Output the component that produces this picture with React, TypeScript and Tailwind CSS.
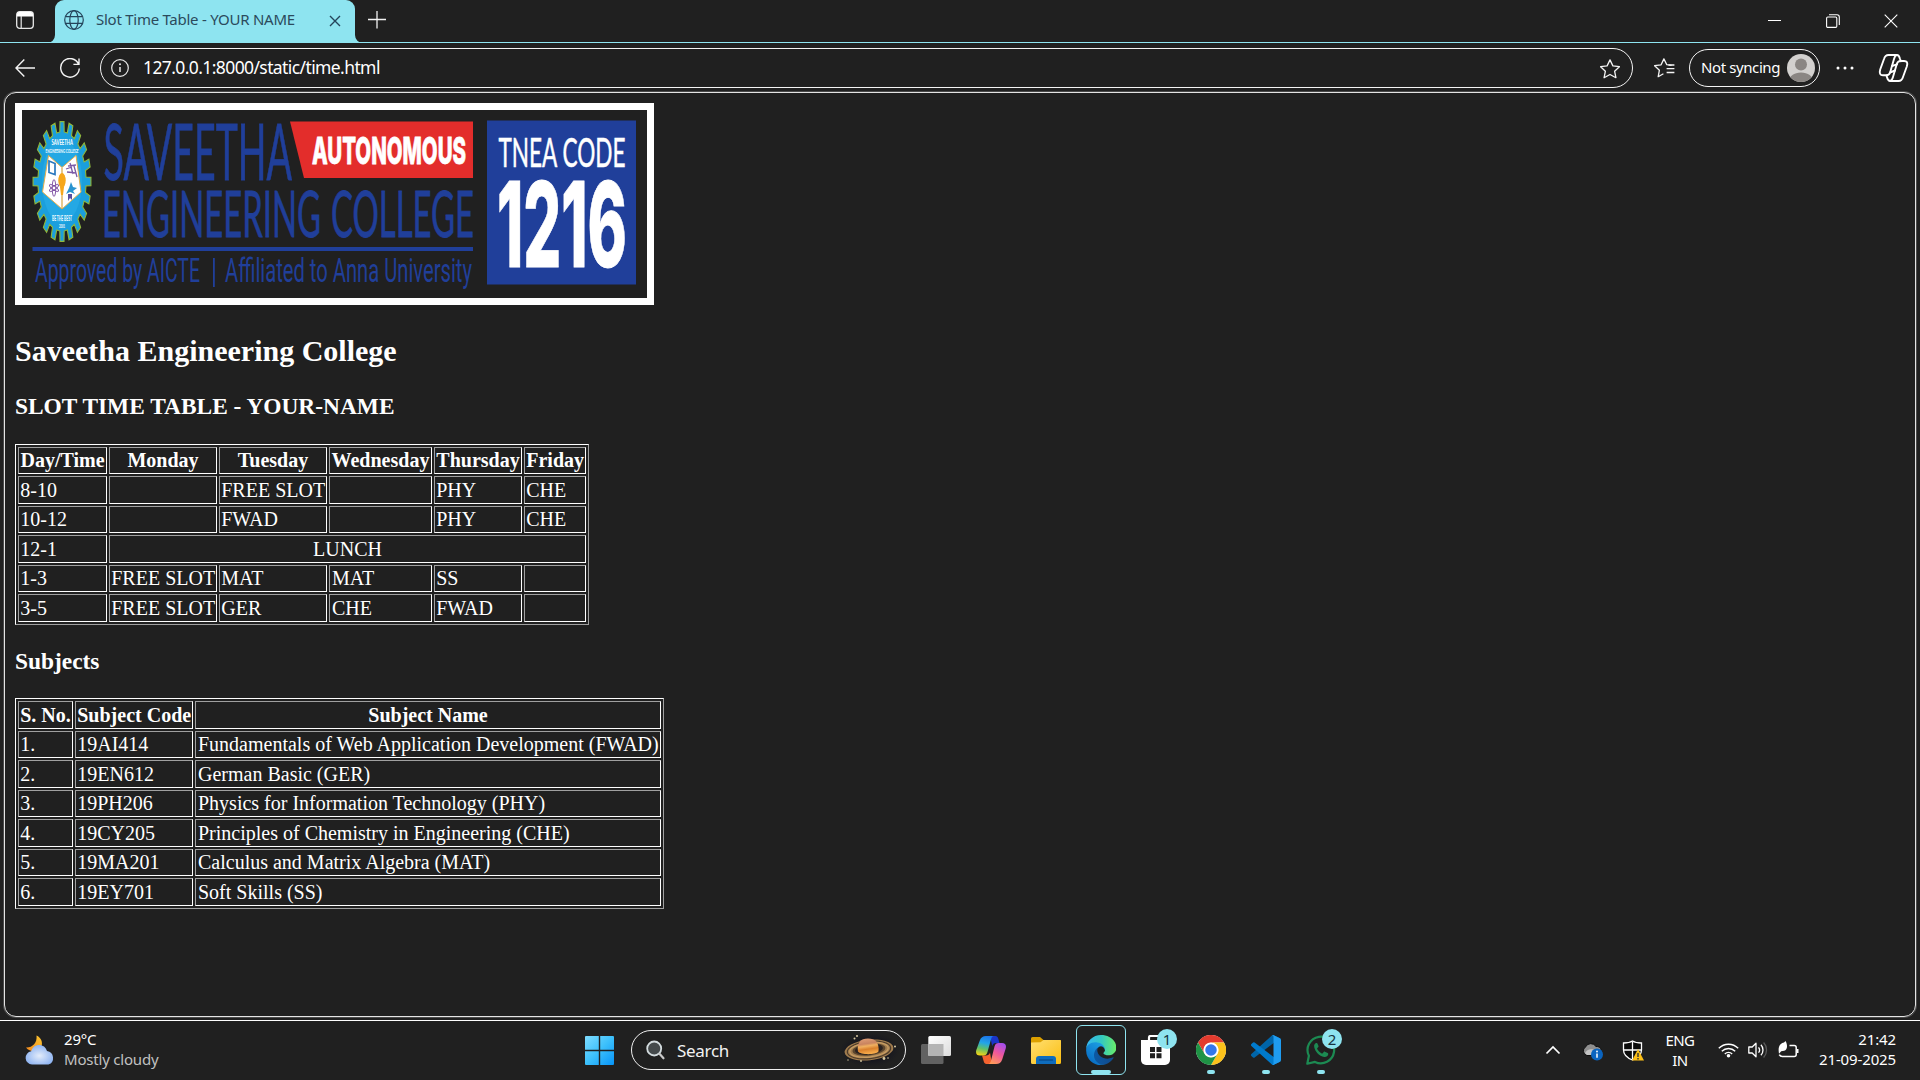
import React from "react";

const UI = "font-['Noto_Sans','Open_Sans',sans-serif]";

/* ---------- Title bar ---------- */

function TitleBar() {
  return (
    <div className="flex h-[43px] shrink-0 items-start border-b border-[#8ee4f0] bg-[#202020]">
      <div className="flex h-[42px] w-[55px] shrink-0 items-center pl-4">
        <svg width="18" height="18" viewBox="0 0 18 18" className="-mt-[2px]">
          <rect x="0.7" y="0.7" width="16.6" height="16.6" rx="3" fill="none" stroke="#e8e8e8" strokeWidth="1.3" />
          <path d="M1 5.6V3a2 2 0 0 1 2-2h12a2 2 0 0 1 2 2v2.6z" fill="#fff" />
          <path d="M5.2 5v12" stroke="#e8e8e8" strokeWidth="1.2" />
        </svg>
      </div>
      <div className="relative flex h-[43px] w-[300px] shrink-0 items-center rounded-t-[9px] bg-[#8ee4f0] pb-1 text-[#2b4a5c]">
        <svg className="absolute bottom-0 -left-2" width="8" height="8" viewBox="0 0 8 8">
          <path d="M8 0v8H0a8 8 0 0 0 8-8z" fill="#8ee4f0" />
        </svg>
        <svg className="absolute -right-2 bottom-0" width="8" height="8" viewBox="0 0 8 8">
          <path d="M0 0v8h8a8 8 0 0 1-8-8z" fill="#8ee4f0" />
        </svg>
        <svg className="ml-[9px] shrink-0" width="20" height="20" viewBox="0 0 20 20" fill="none" stroke="#24445a" strokeWidth="1.2">
          <circle cx="10" cy="10" r="9.3" />
          <ellipse cx="10" cy="10" rx="4.2" ry="9.3" />
          <path d="M1.5 6.6h17M1.5 13.4h17" />
        </svg>
        <span className={`${UI} ml-[12px] w-[234px] text-[15px] tracking-[-0.26px] whitespace-nowrap`}>
          Slot Time Table - YOUR NAME
        </span>
        <svg className="mt-[2px] -ml-px shrink-0" width="12" height="12" viewBox="0 0 12 12" stroke="#24445a" strokeWidth="1.4">
          <path d="M1 1l10 10M11 1L1 11" />
        </svg>
      </div>
      <svg className="mt-[11px] ml-[13px]" width="18" height="18" viewBox="0 0 18 18" stroke="#f2f2f2" strokeWidth="1.3">
        <path d="M9 0v17.4M0 8.5h18" />
      </svg>
      <div className="ml-auto flex h-[42px] items-center">
        <svg width="13" height="14" viewBox="0 0 13 14" stroke="#fff">
          <path d="M0 6.5h13" />
        </svg>
        <svg className="ml-[45px]" width="14" height="14" viewBox="0 0 14 14" fill="none" stroke="#fff" strokeWidth="1.1">
          <rect x="0.6" y="3" width="10.2" height="10.4" rx="1.2" />
          <path d="M3 .7h8a2.3 2.3 0 0 1 2.3 2.3v8" />
        </svg>
        <svg className="mr-[22px] ml-[44px]" width="14" height="14" viewBox="0 0 14 14" stroke="#fff" strokeWidth="1.1">
          <path d="M.7.7l12.6 12.6M13.3.7L.7 13.3" />
        </svg>
      </div>
    </div>
  );
}

/* ---------- Address toolbar ---------- */

const STAR = "M10 .9l2.9 6 6.5.8-4.8 4.5 1.3 6.5-5.9-3.2-5.9 3.2 1.3-6.5L.6 7.7l6.5-.8z";

function Toolbar() {
  return (
    <div className="flex h-[49px] shrink-0 items-start pt-[5px]">
      <div className="flex h-10 w-[100px] shrink-0 items-center pl-[15px]">
        <svg width="20" height="18" viewBox="0 0 20 18" fill="none" stroke="#f4f4f4" strokeWidth="1.4">
          <path d="M9.3.6L1 9l8.3 8.4M1 9h19" />
        </svg>
        <svg className="ml-[25px]" width="20" height="21" viewBox="0 0 20 21" fill="none" stroke="#f4f4f4" strokeWidth="1.4">
          <path d="M18.6 6.2A9.3 9.3 0 1 0 19.3 10.5M19 .6v5.8h-5.6" />
        </svg>
      </div>
      <div className="flex h-10 w-[1533px] shrink-0 items-center rounded-full border border-[#f4f4f4] pr-3 pl-[10px]">
        <svg width="18" height="18" viewBox="0 0 18 18" fill="none" stroke="#e8e8e8" strokeWidth="1.2">
          <circle cx="9" cy="9" r="8.3" />
          <path d="M9 7.9v5.2" strokeWidth="1.5" />
          <circle cx="9" cy="5.3" r="1" fill="#e8e8e8" stroke="none" />
        </svg>
        <span className={`${UI} ml-[14px] pb-[2px] text-[17.5px] tracking-[-0.6px] whitespace-nowrap text-white`}>
          127.0.0.1:8000/static/time.html
        </span>
        <svg className="mt-px ml-auto" width="20" height="20" viewBox="0 0 20 20" fill="none" stroke="#f4f4f4" strokeWidth="1.3" strokeLinejoin="round">
          <path d={STAR} />
        </svg>
      </div>
      <svg className="mt-[10px] ml-[21px] shrink-0" width="21" height="20" viewBox="0 0 21 20" fill="none" stroke="#f4f4f4" strokeWidth="1.3" strokeLinejoin="round">
        <path d="M17.6 7.3l-4.8-.6L9.9.9 7.1 6.8.6 7.700l4.8 4.500-1.200 6.500 5.200-2.900" />
        <path d="M12.600 10.600H20.400M12.600 14.500H20.400M14.500 7H20.400" />
      </svg>
      <div className="mt-px ml-[14px] flex h-[38px] w-[131px] shrink-0 items-center rounded-full border border-[#f4f4f4] pl-[11px]">
        <span className={`${UI} w-[86px] pb-px text-[15px] tracking-[-0.4px] whitespace-nowrap text-white`}>Not syncing</span>
        <svg className="shrink-0" width="28" height="28" viewBox="0 0 28 28">
          <defs>
            <clipPath id="avatar"><circle cx="14" cy="14" r="14" /></clipPath>
          </defs>
          <circle cx="14" cy="14" r="14" fill="#d2d0ce" />
          <g clipPath="url(#avatar)" fill="#8a8683">
            <circle cx="14" cy="10.500" r="6" />
            <path d="M2 28c0-6 5-9.500 12-9.500S26 22 26 28z" />
          </g>
        </svg>
      </div>
      <svg className="mt-[18px] ml-[16px] shrink-0" width="18" height="4" viewBox="0 0 18 4" fill="#fff">
        <circle cx="2" cy="2" r="1.500" />
        <circle cx="9" cy="2" r="1.500" />
        <circle cx="16" cy="2" r="1.500" />
      </svg>
      <svg className="mt-[5px] ml-[24px] shrink-0" width="31" height="30" viewBox="0 0 31 30" fill="none" stroke="#fff" strokeWidth="1.900" strokeLinejoin="round" strokeLinecap="round">
        <path d="M18.500 2H10.500C8 2 6.700 3.500 6 6L2.200 16.500C1 20.500 2.200 22.300 5 22.300H8.500C10.500 22.300 11.500 21.300 12.200 19.200L16 6C16.800 3.300 17.500 2 19 2C20.800 2 21.300 3.300 22 5.800L22.800 8.300" />
        <path d="M12.500 28H20.500C23 28 24.300 26.500 25 24L28.800 13.500C30 9.500 29 8 26 8H22.500C20.500 8 19.500 9 18.800 11L15 24C14.200 26.700 13.500 28 12 28C10.200 28 9.700 26.700 9 24.200L8.500 22.500" />
        <path d="M14 13L19 11.300M12 19.500L17 17.500" />
      </svg>
    </div>
  );
}

/* ---------- College banner ---------- */

const TEETH = 20;
const gear = Array.from({ length: TEETH * 4 }, (_, i) => {
  const phase = i % 4;
  const a = ((Math.floor(i / 4) + [-0.29, -0.22, 0.22, 0.29][phase]) / TEETH) * Math.PI * 2 - Math.PI / 2;
  const k = phase === 1 || phase === 2 ? 1 : 0.83;
  return `${(62 + 29 * k * Math.cos(a)).toFixed(2)},${(181.5 + 60 * k * Math.sin(a)).toFixed(2)}`;
}).join(" ");

type FitProps = {
  x: number;
  y: number;
  w: number;
  size: number;
  className: string;
  children: string;
};

function Fit({ x, y, w, size, className, children }: FitProps) {
  return (
    <text x={x} y={y} textLength={w} lengthAdjust="spacingAndGlyphs" fontSize={size} className={className}>
      {children}
    </text>
  );
}

const SEAL = "fill-white [font-family:Lato,sans-serif] font-bold";
const NAVY = "fill-[#203f9a] stroke-[#203f9a] stroke-[0.8px] [font-family:Lato,sans-serif] font-normal";
const THIN = "fill-[#203f9a] [font-family:Roboto,sans-serif] font-normal";
const HEAVY = "fill-white stroke-white stroke-[0.8px] [font-family:Inter,sans-serif] font-extrabold";

function Banner() {
  return (
    <div className="h-[202px] w-[639px] border-[7px] border-white">
      <svg width="625" height="188" viewBox="22 110 625 188" className="block overflow-visible">
        <polygon points={gear} fill="#1b9fdd" stroke="#8fb63c" strokeWidth="1.100" />
        <ellipse cx="62" cy="181" rx="20" ry="42" fill="#24a8e4" />
        <Fit x={51.500} y={144.500} w={21.500} size={8} className={SEAL}>SAVEETHA</Fit>
        <Fit x={45.500} y={152.500} w={33} size={5.500} className={SEAL}>ENGINEERING COLLEGE</Fit>
        <path d="M48.500 155.500L62 167.500L76 155.500L81 192L62 209L42.500 192z" fill="#fff" stroke="#e8b04c" strokeWidth="1" />
        <path d="M62 168v41" stroke="#d9a441" strokeWidth="1.200" />
        <ellipse cx="62" cy="180.500" rx="3.700" ry="7.500" fill="#f6a71c" />
        <path d="M60 187h4l-1 8h-2z" fill="#f6a71c" />
        <path d="M49 161l6 2.500v11l-6-2z" fill="#fff" stroke="#2a78be" strokeWidth="1.700" />
        <path d="M66 169l6-2M70 163l3 11M74 166l3 11M67 172l9 1M68 166l8-1" stroke="#7b5aa6" strokeWidth="1.300" />
        <g fill="none" stroke="#7a4a9e" strokeWidth="0.900">
          <ellipse cx="54" cy="188" rx="1.800" ry="8.500" />
          <ellipse cx="54" cy="188" rx="1.800" ry="5.500" transform="rotate(55 54 188)" />
          <ellipse cx="54" cy="188" rx="1.800" ry="5.500" transform="rotate(-55 54 188)" />
        </g>
        <path d="M71 182l2 5 4 1-4 3 2 3-5-2-4 2 3-6z" fill="#2a94d0" />
        <path d="M68 194h4v6l-2-2-2 3z" fill="#5a4fa0" />
        <Fit x={52} y={220.500} w={20} size={6.500} className={SEAL}>BE THE BEST</Fit>
        <Fit x={59} y={227.500} w={6} size={6} className={SEAL}>2001</Fit>

        <Fit x={103.500} y={180} w={188.500} size={78} className={NAVY}>SAVEETHA</Fit>
        <Fit x={102} y={236.500} w={219} size={64} className={NAVY}>ENGINEERING</Fit>
        <Fit x={331} y={236.500} w={143} size={64} className={NAVY}>COLLEGE</Fit>
        <polygon points="290,121.500 473,121.500 473,178 304,178" fill="#e32d2b" />
        <Fit x={312} y={163.500} w={154} size={37} className={HEAVY}>AUTONOMOUS</Fit>
        <rect x="32.500" y="247" width="440.500" height="4" fill="#203f9a" />
        <Fit x={35} y={281.500} w={165} size={33} className={THIN}>Approved by AICTE</Fit>
        <rect x="213" y="258" width="1.800" height="29" fill="#203f9a" />
        <Fit x={225} y={281.500} w={247} size={33} className={THIN}>Affiliated to Anna University</Fit>
        <rect x="487" y="120.500" width="149" height="164" fill="#203f9a" />
        <Fit x={498.500} y={166.500} w={127} size={40} className="fill-white stroke-white stroke-[0.5px] [font-family:Lato,sans-serif] font-normal">TNEA CODE</Fit>
        <Fit x={497} y={266.500} w={130} size={118} className={HEAVY}>1216</Fit>
      </svg>
    </div>
  );
}

/* ---------- Page tables ---------- */

const TABLE =
  "border-separate border-spacing-[2px] table-fixed border border-t-white border-l-white border-r-[#a0a0a0] border-b-[#a0a0a0] text-[20px] leading-[22px]";
const CELL =
  "border border-t-[#a0a0a0] border-l-[#a0a0a0] border-r-white border-b-white px-[1.250px] pt-0 pb-px whitespace-nowrap";

const slots: string[][] = [
  ["8-10", "", "FREE SLOT", "", "PHY", "CHE"],
  ["10-12", "", "FWAD", "", "PHY", "CHE"],
  ["12-1", "LUNCH"],
  ["1-3", "FREE SLOT", "MAT", "MAT", "SS", ""],
  ["3-5", "FREE SLOT", "GER", "CHE", "FWAD", ""],
];

const subjects: string[][] = [
  ["1.", "19AI414", "Fundamentals of Web Application Development (FWAD)"],
  ["2.", "19EN612", "German Basic (GER)"],
  ["3.", "19PH206", "Physics for Information Technology (PHY)"],
  ["4.", "19CY205", "Principles of Chemistry in Engineering (CHE)"],
  ["5.", "19MA201", "Calculus and Matrix Algebra (MAT)"],
  ["6.", "19EY701", "Soft Skills (SS)"],
];

function SlotTable() {
  return (
    <table className={`${TABLE} mt-[24px] w-[574px]`}>
      <colgroup>
        <col className="w-[89px]" />
        <col className="w-[108px]" />
        <col className="w-[108px]" />
        <col className="w-[103px]" />
        <col className="w-[88px]" />
        <col className="w-[62px]" />
      </colgroup>
      <tbody>
        <tr className="h-[27px]">
          {["Day/Time", "Monday", "Tuesday", "Wednesday", "Thursday", "Friday"].map((d) => (
            <th key={d} className={`${CELL} text-center font-bold`}>{d}</th>
          ))}
        </tr>
        {slots.map((row, r) => (
          <tr key={row[0]} className={r % 2 === 0 ? "h-[28px]" : "h-[27px]"}>
            {row.map((c, i) => (
              <td
                key={i}
                colSpan={row.length === 2 && i === 1 ? 5 : 1}
                className={`${CELL} ${row.length === 2 && i === 1 ? "text-center" : "text-left"} ${i === 3 ? "pl-[2px]" : ""}`}
              >
                {c}
              </td>
            ))}
          </tr>
        ))}
      </tbody>
    </table>
  );
}

function SubjectTable() {
  return (
    <table className={`${TABLE} mt-[23px] w-[649px]`}>
      <colgroup>
        <col className="w-[55px]" />
        <col className="w-[118px]" />
        <col className="w-[466px]" />
      </colgroup>
      <tbody>
        <tr className="h-[28px]">
          {["S. No.", "Subject Code", "Subject Name"].map((d) => (
            <th key={d} className={`${CELL} text-center font-bold`}>{d}</th>
          ))}
        </tr>
        {subjects.map((row, r) => (
          <tr key={row[0]} className={r % 2 === 0 ? "h-[27px]" : "h-[28px]"}>
            {row.map((c, i) => (
              <td key={i} className={`${CELL} text-left ${i === 2 ? "pl-[2px]" : ""}`}>{c}</td>
            ))}
          </tr>
        ))}
      </tbody>
    </table>
  );
}

function Page() {
  return (
    <main className="mr-[4px] ml-[4px] h-[925px] shrink-0 rounded-[12px] border border-[#e4e4e4] pt-[10px] pl-[10px] font-['Liberation_Serif',serif] text-white shadow-[0_0_0_1px_#4a4a4a]">
      <Banner />
      <h2 className="mt-[29px] text-[30px] leading-[34px] font-bold">Saveetha Engineering College</h2>
      <h3 className="mt-[25px] text-[23.4px] leading-[27px] font-bold">SLOT TIME TABLE - YOUR-NAME</h3>
      <SlotTable />
      <h3 className="mt-[23px] text-[23.4px] leading-[27px] font-bold">Subjects</h3>
      <SubjectTable />
    </main>
  );
}

/* ---------- Taskbar ---------- */

function WeatherIcon() {
  return (
    <svg width="31" height="30" viewBox="0 0 31 30">
      <defs>
        <linearGradient id="moon" x1="0" y1="1" x2="1" y2="0">
          <stop offset="0" stopColor="#f58a1f" />
          <stop offset="1" stopColor="#fbc62f" />
        </linearGradient>
        <radialGradient id="cloud" cx="0.5" cy="0.55" r="0.6">
          <stop offset="0" stopColor="#e3ecfa" />
          <stop offset="1" stopColor="#86aef0" />
        </radialGradient>
      </defs>
      <path d="M11.500 0.500C16 2.500 18 7 16.500 11.500C14 17 5.500 18 1 12.500C7 13 12.500 8 11.500 0.500z" fill="url(#moon)" />
      <path d="M7 29.500a6.700 6.700 0 0 1-.8-13.300C7.500 12 10.500 10 14 10c4 0 6.800 2.200 8 6a7 7 0 0 1 1.500 13.500z" fill="url(#cloud)" />
    </svg>
  );
}

function WindowsIcon() {
  return (
    <svg className="shrink-0" width="29" height="29" viewBox="0 0 29 29">
      <defs>
        <linearGradient id="win" gradientUnits="userSpaceOnUse" x1="0" y1="0" x2="29" y2="29">
          <stop offset="0" stopColor="#7fdcff" />
          <stop offset="0.5" stopColor="#3cc0fb" />
          <stop offset="1" stopColor="#0794f8" />
        </linearGradient>
      </defs>
      <path d="M1 0h12.800v13.800H0V1a1 1 0 0 1 1-1zM15.200 0H28a1 1 0 0 1 1 1v12.800H15.200zM0 15.200h13.800V29H1a1 1 0 0 1-1-1zM15.200 15.200H29V28a1 1 0 0 1-1 1H15.200z" fill="url(#win)" />
    </svg>
  );
}

function SaturnIcon() {
  return (
    <svg width="60" height="34" viewBox="0 0 60 34">
      <defs>
        <radialGradient id="space">
          <stop offset="0.5" stopColor="#11111c" stopOpacity="0.9" />
          <stop offset="1" stopColor="#15151f" stopOpacity="0" />
        </radialGradient>
        <linearGradient id="planet" x1="0" y1="0" x2="0.2" y2="1">
          <stop offset="0" stopColor="#e2a27a" />
          <stop offset="0.4" stopColor="#c98460" />
          <stop offset="0.55" stopColor="#f0b060" />
          <stop offset="0.75" stopColor="#d9802c" />
          <stop offset="1" stopColor="#f5a848" />
        </linearGradient>
      </defs>
      <ellipse cx="30" cy="17" rx="30" ry="17" fill="url(#space)" />
      <g transform="rotate(-6 29 17)">
        <ellipse cx="29" cy="17" rx="24.500" ry="10.300" fill="#a07c4e" />
        <ellipse cx="29" cy="17" rx="21.800" ry="8.700" fill="none" stroke="#4e3c2a" strokeWidth="1.200" />
        <ellipse cx="29" cy="16.800" rx="19.300" ry="7.300" fill="none" stroke="#c79c62" strokeWidth="1.300" />
        <ellipse cx="29" cy="16.500" rx="16.500" ry="6" fill="#5a442c" />
        <ellipse cx="29" cy="16.300" rx="14" ry="5.200" fill="#2a2220" />
      </g>
      <path d="M18 18.500C16.500 10 20.500 5.500 28 5.500S39.500 10 38.500 18.500C36 22 20.500 22 18 18.500z" fill="url(#planet)" />
      <g fill="#d8c9a0">
        <circle cx="17" cy="3" r="1" /><circle cx="14.500" cy="5.500" r="1" /><circle cx="55" cy="13.500" r="1" />
        <circle cx="44" cy="25.500" r="1.400" /><circle cx="48" cy="25" r="0.800" /><circle cx="21" cy="28" r="0.900" /><circle cx="8" cy="27" r="0.700" />
      </g>
    </svg>
  );
}

function TaskViewIcon() {
  return (
    <svg width="30" height="28" viewBox="0 0 30 28">
      <defs>
        <linearGradient id="tvf" x1="0" y1="0" x2="1" y2="1">
          <stop offset="0" stopColor="#ffffff" />
          <stop offset="1" stopColor="#dcdcdc" />
        </linearGradient>
      </defs>
      <rect x="0" y="8" width="22.500" height="20" rx="1.500" fill="#626262" />
      <rect x="7.300" y="0" width="22.700" height="20" rx="1.500" fill="url(#tvf)" />
      <path d="M7.300 8H22.500V20H7.300z" fill="#b4b4b4" />
    </svg>
  );
}

function CopilotIcon() {
  return (
    <svg width="30" height="28" viewBox="0 0 30 28">
      <defs>
        <linearGradient id="cpl" x1="0.500" y1="0" x2="0.300" y2="1">
          <stop offset="0" stopColor="#1c78ea" />
          <stop offset="0.350" stopColor="#22a5e8" />
          <stop offset="0.650" stopColor="#5fc06a" />
          <stop offset="1" stopColor="#f5d313" />
        </linearGradient>
        <linearGradient id="cpr" x1="0.800" y1="0" x2="0.300" y2="1">
          <stop offset="0" stopColor="#a24df0" />
          <stop offset="0.500" stopColor="#f0589a" />
          <stop offset="1" stopColor="#ff9a5a" />
        </linearGradient>
      </defs>
      <path d="M14 0h5.500c1.500 0 2.300 1 2.800 2.800L23.500 7H20c-2 0-3.200 1-3.800 3z" fill="#1a35c8" />
      <path d="M16 28h-5.500c-1.500 0-2.300-1-2.800-2.800L6 19.500h4c2 0 3.500-1 4-3z" fill="#f4622f" />
      <path d="M10 0h8c-1.500 0-2.300 1-2.900 3L11.500 16c-.7 2.400-1.800 3.500-4.200 3.500H4c-3.300 0-4.600-2.200-3.700-5.500L3.800 4.500C4.800 1.500 6.800 0 10 0z" fill="url(#cpl)" />
      <path d="M20 28h-8c1.500 0 2.300-1 2.900-3L18.500 10.500C19.200 8.100 20.300 7 22.700 7H26c3.300 0 4.600 2.200 3.700 5.500L26.200 23.500C25.200 26.500 23.200 28 20 28z" fill="url(#cpr)" />
    </svg>
  );
}

function FolderIcon() {
  return (
    <svg width="30" height="27" viewBox="0 0 30 27">
      <defs>
        <linearGradient id="fold" x1="0" y1="0" x2="1" y2="1">
          <stop offset="0" stopColor="#ffdf72" />
          <stop offset="1" stopColor="#fbbe10" />
        </linearGradient>
      </defs>
      <path d="M0 1.500A1.500 1.500 0 0 1 1.500 0H9l3.500 3H29a1 1 0 0 1 1 1v7H0z" fill="#dca000" />
      <path d="M0 5.500L9.500 5.200 12.500 3H29a1 1 0 0 1 1 1V25.500a1.500 1.500 0 0 1-1.500 1.500h-27A1.500 1.500 0 0 1 0 25.500z" fill="url(#fold)" />
      <path d="M5 27V22a3 3 0 0 1 3-3H22a3 3 0 0 1 3 3v5z" fill="#0f6dbe" />
      <path d="M8.500 23h13" stroke="#0a4f92" strokeWidth="1.300" strokeLinecap="round" />
    </svg>
  );
}

function EdgeIcon() {
  return (
    <svg width="30" height="30" viewBox="0 0 256 256">
      <defs>
        <linearGradient id="e1" gradientUnits="userSpaceOnUse" x1="63" y1="178" x2="241" y2="178">
          <stop offset="0" stopColor="#0c59a4" />
          <stop offset="1" stopColor="#114a8b" />
        </linearGradient>
        <linearGradient id="e2" gradientUnits="userSpaceOnUse" x1="150" y1="90" x2="45" y2="230">
          <stop offset="0" stopColor="#1b9de2" />
          <stop offset="0.500" stopColor="#1386d4" />
          <stop offset="1" stopColor="#0a6fc4" />
        </linearGradient>
        <linearGradient id="e3" gradientUnits="userSpaceOnUse" x1="10" y1="80" x2="250" y2="90">
          <stop offset="0" stopColor="#35b8f0" />
          <stop offset="0.500" stopColor="#34c8c0" />
          <stop offset="1" stopColor="#66eb6e" />
        </linearGradient>
      </defs>
      <path d="M231 190c-3 2-7 4-11 5a100 100 0 0 1-36 7c-47 0-88-32-88-74a31 31 0 0 1 16-27c-43 2-54 46-54 72 0 74 68 81 82 81 8 0 20-2 27-4l1-1a128 128 0 0 0 67-53 4 4 0 0 0-4-6z" fill="url(#e1)" />
      <path d="M106 241a79 79 0 0 1-23-21 81 81 0 0 1 29-119c3-2 9-4 16-4a34 34 0 0 1 26 13 33 33 0 0 1 7 20c0-1 25-80-80-80C37 50 1 92 1 129a130 130 0 0 0 12 56 128 128 0 0 0 156 67 76 76 0 0 1-63-11z" fill="url(#e2)" />
      <path d="M152 149c-1 1-3 3-3 6 0 3 2 6 5 9 15 10 43 9 43 9a62 62 0 0 0 31-9 63 63 0 0 0 31-54c1-23-8-38-11-45C226 22 178 0 128 0A128 128 0 0 0 0 127c1-37 37-66 81-66 4 0 24 0 43 10a74 74 0 0 1 31 30c6 11 7 25 7 30s-3 13-10 18z" fill="url(#e3)" />
    </svg>
  );
}

function StoreIcon() {
  return (
    <svg width="30" height="30" viewBox="0 0 30 30">
      <path d="M8 6V2.500A1.500 1.500 0 0 1 9.500 1H20" fill="none" stroke="#fff" strokeWidth="2.200" />
      <path d="M0 5h29v20a5 5 0 0 1-5 5H5a5 5 0 0 1-5-5z" fill="#fff" />
      <path d="M9 12h5v5H9zM15.500 12h5v5h-5zM9 18.200h5v5H9zM15.500 18.200h5v5h-5z" fill="#202020" />
    </svg>
  );
}

function ChromeIcon() {
  return (
    <svg width="30" height="30" viewBox="0 0 48 48">
      <circle cx="24" cy="24" r="24" fill="#fff" />
      <path d="M3.200 12A24 24 0 0 1 44.800 12H24A12 12 0 0 0 13.600 30z" fill="#e33b2e" />
      <path d="M44.800 12A24 24 0 0 1 24 48L34.400 30A12 12 0 0 0 24 12z" fill="#fcc21b" />
      <path d="M24 48A24 24 0 0 1 3.200 12L13.600 30A12 12 0 0 0 34.400 30z" fill="#1f9345" />
      <circle cx="24" cy="24" r="11.500" fill="#fff" />
      <circle cx="24" cy="24" r="9.200" fill="#3377ea" />
    </svg>
  );
}

function CodeIcon() {
  return (
    <svg width="30" height="30" viewBox="0 0 100 100">
      <path d="M96.500 10.800L75.900.9a6.200 6.200 0 0 0-7.100 1.200L1.300 63.600a4.200 4.200 0 0 0 0 6.200l5.500 5a4.200 4.200 0 0 0 5.300.2L93.400 13.400A4.100 4.100 0 0 1 100 16.700v-.3a6.300 6.300 0 0 0-3.500-5.600z" fill="#0065a9" />
      <path d="M96.500 89.200L75.900 99.100a6.200 6.200 0 0 1-7.100-1.200L1.300 36.400a4.200 4.200 0 0 1 0-6.200l5.500-5a4.200 4.200 0 0 1 5.300-.2L93.400 86.600A4.100 4.100 0 0 0 100 83.300v.3a6.300 6.300 0 0 1-3.500 5.600z" fill="#007acc" />
      <path d="M75.900 99.100a6.200 6.200 0 0 1-7.100-1.200A3.700 3.700 0 0 0 75 95.300V4.700a3.700 3.700 0 0 0-6.200-2.600A6.200 6.200 0 0 1 75.900.9l20.600 9.900A6.300 6.300 0 0 1 100 16.400v67.200a6.300 6.300 0 0 1-3.500 5.600z" fill="#1f9cf0" />
    </svg>
  );
}

function WhatsAppIcon() {
  return (
    <svg width="30" height="30" viewBox="0 0 30 30" fill="none" stroke="#1c8a52">
      <path d="M2.900 20.800A13.300 13.300 0 1 1 9 26.900L1.300 28.700z" strokeWidth="2.200" strokeLinejoin="round" />
      <path d="M10.200 8c-1.500.5-2.400 2-2 3.900 1 5 5 9 10 10 2 .3 3.600-.8 4-2.500.1-.7 0-1-.5-1.300l-2.800-1.400c-.5-.2-.9-.1-1.200.3l-1 1.200c-.3.3-.6.4-1 .2-2-1-3.500-2.500-4.500-4.400-.2-.4-.1-.7.200-1l.9-1c.3-.4.3-.7.2-1.100L11.400 8.500c-.3-.5-.7-.6-1.200-.5z" fill="#1c8a52" stroke="none" />
    </svg>
  );
}

type SlotProps = { children: React.ReactNode; badge?: string; running?: boolean; active?: boolean };

function AppSlot({ children, badge, running, active }: SlotProps) {
  return (
    <div className={`relative flex h-[50px] w-[50px] shrink-0 items-center justify-center ${active ? "rounded-[6px] border border-[#8ee4f0]" : ""}`}>
      {children}
      {badge && (
        <span className={`${UI} absolute top-1 right-[4px] flex h-5 w-5 items-center justify-center rounded-full bg-[#8ee4f0] text-[15px] leading-5 text-[#173440]`}>
          {badge}
        </span>
      )}
      {running && <span className="absolute bottom-px left-[21px] h-1 w-2 rounded-full bg-[#8ee4f0]" />}
      {active && <span className="absolute bottom-0 left-[14px] h-1 w-5 rounded-full bg-[#8ee4f0]" />}
    </div>
  );
}

function Tray() {
  return (
    <div className={`${UI} flex h-full w-[375px] shrink-0 items-center text-white`}>
      <svg className="mr-[22px] shrink-0" width="16" height="10" viewBox="0 0 16 10" fill="none" stroke="#fff" strokeWidth="1.700">
        <path d="M1.500 8.500L8 2l6.500 6.500" />
      </svg>
      <svg className="mt-1 -ml-px shrink-0" width="21" height="18" viewBox="0 0 21 18">
        <path d="M5 12.500A4.700 4.700 0 0 1 3.500 4 6 6 0 0 1 14 3.500 4.500 4.500 0 0 1 15.500 12.500z" fill="#8f8f8f" stroke="#0e0e0e" strokeWidth="1" />
        <path d="M3 10c2-4 7-5 11-2v4H5z" fill="#c4c4c4" />
        <circle cx="15" cy="11.500" r="6" fill="#0a64c0" />
        <path d="M15 10.500v4.300" stroke="#fff" strokeWidth="1.500" />
        <circle cx="15" cy="8.500" r="0.900" fill="#fff" />
      </svg>
      <svg className="ml-[19px] shrink-0" width="22" height="21" viewBox="0 0 22 21">
        <path d="M10.500 1C13 2.600 16 3 19.500 3v7c0 5-4 8-9 10C5.500 18 1.500 15 1.500 10V3C5 3 8 2.600 10.500 1z" fill="#0b0b0b" stroke="#fff" strokeWidth="1.300" />
        <path d="M10.500 1.500V19M1.500 10H19.500" stroke="#fff" strokeWidth="1.300" />
        <path d="M16 9l6 11.500H10z" fill="#fcbf16" />
        <path d="M16 13v4M16 18v1.400" stroke="#333" strokeWidth="1.400" />
      </svg>
      <div className="ml-[20px] w-[32px] shrink-0 text-center text-[15px] leading-5 tracking-[-0.600px]">
        <div>ENG</div>
        <div>IN</div>
      </div>
      <svg className="ml-[22px] shrink-0" width="21" height="16" viewBox="0 0 21 16" fill="none" stroke="#fff" strokeWidth="1.400">
        <path d="M.8 6.300A13.700 13.700 0 0 1 20.200 6.300M3.800 9.300A9.500 9.500 0 0 1 17.200 9.300M6.800 12A5.500 5.500 0 0 1 14.200 12" />
        <circle cx="10.500" cy="13.800" r="1.800" fill="#fff" stroke="none" />
      </svg>
      <svg className="ml-[9px] shrink-0" width="20" height="18" viewBox="0 0 20 18" fill="none" stroke="#fff" strokeWidth="1.300" strokeLinejoin="round">
        <path d="M.8 6v6h3.400L8 15.800V2.200L4.200 6z" />
        <path d="M10.500 6.300a4.200 4.200 0 0 1 0 5.400M12.900 3.800a7.500 7.500 0 0 1 0 10.400" />
        <path d="M15.600 1.500a11 11 0 0 1 0 15" stroke="#5a5a5a" />
      </svg>
      <svg className="ml-[10px] shrink-0" width="22" height="18" viewBox="0 0 22 18" fill="none" stroke="#fff" strokeWidth="1.500">
        <path d="M11.500 4.500h4.700a2 2 0 0 1 2 2v7a2 2 0 0 1-2 2H4.500a3.500 3.500 0 0 1-3.200-1.800" />
        <path d="M18.800 8h1.700v4h-1.700z" fill="#fff" stroke="none" />
        <path d="M7.500 0C9.500 3.500 10 8.500 6.200 9.800L3.200 10.200 1 12.800C0 7 .8 2.800 6 1.600z" fill="#fff" stroke="none" />
      </svg>
      <div className="ml-auto w-[103px] pr-[24px] pb-[2px] text-[15px] leading-5 tracking-[-0.130px] whitespace-nowrap">
        <div className="flex justify-end">21:42</div>
        <div className="flex justify-end">21-09-2025</div>
      </div>
    </div>
  );
}

function Taskbar() {
  return (
    <div className="mt-[3px] flex h-[60px] shrink-0 items-center border-t border-white bg-[#202020] pb-px">
      <div className="flex w-[585px] shrink-0 items-center pl-[25px]">
        <WeatherIcon />
        <div className={`${UI} ml-[8px] pb-[3px] text-[15px] leading-5 tracking-[-0.200px] text-white`}>
          <div>29°C</div>
          <div className="text-[#c0c0c0]">Mostly cloudy</div>
        </div>
      </div>
      <WindowsIcon />
      <div className="mx-[17px] flex h-10 w-[275px] shrink-0 items-center rounded-full border border-[#f0f0f0] pl-[14px]">
        <svg width="20" height="20" viewBox="0 0 20 20" fill="none" strokeLinecap="round">
          <circle cx="8.200" cy="8.500" r="7" fill="#454a4c" stroke="#d4dcdf" strokeWidth="1.800" />
          <path d="M13.500 13.800l4 4.500" stroke="#c9c9c9" strokeWidth="2.200" />
        </svg>
        <span className={`${UI} ml-[11px] pt-[2px] text-[17px] tracking-[-0.300px] text-[#f2f2f2]`}>Search</span>
        <div className="mr-[5px] ml-auto"><SaturnIcon /></div>
      </div>
      <div className="-ml-[12px] flex items-center gap-[5px]">
        <AppSlot><TaskViewIcon /></AppSlot>
        <AppSlot><CopilotIcon /></AppSlot>
        <AppSlot><FolderIcon /></AppSlot>
        <AppSlot active><EdgeIcon /></AppSlot>
        <AppSlot badge="1"><StoreIcon /></AppSlot>
        <AppSlot running><ChromeIcon /></AppSlot>
        <AppSlot running><CodeIcon /></AppSlot>
        <AppSlot running badge="2"><WhatsAppIcon /></AppSlot>
      </div>
      <div className="ml-auto h-full"><Tray /></div>
    </div>
  );
}

export default function App() {
  return (
    <div className="flex h-[1080px] w-[1920px] flex-col overflow-hidden bg-[#202020]">
      <TitleBar />
      <Toolbar />
      <Page />
      <Taskbar />
    </div>
  );
}
